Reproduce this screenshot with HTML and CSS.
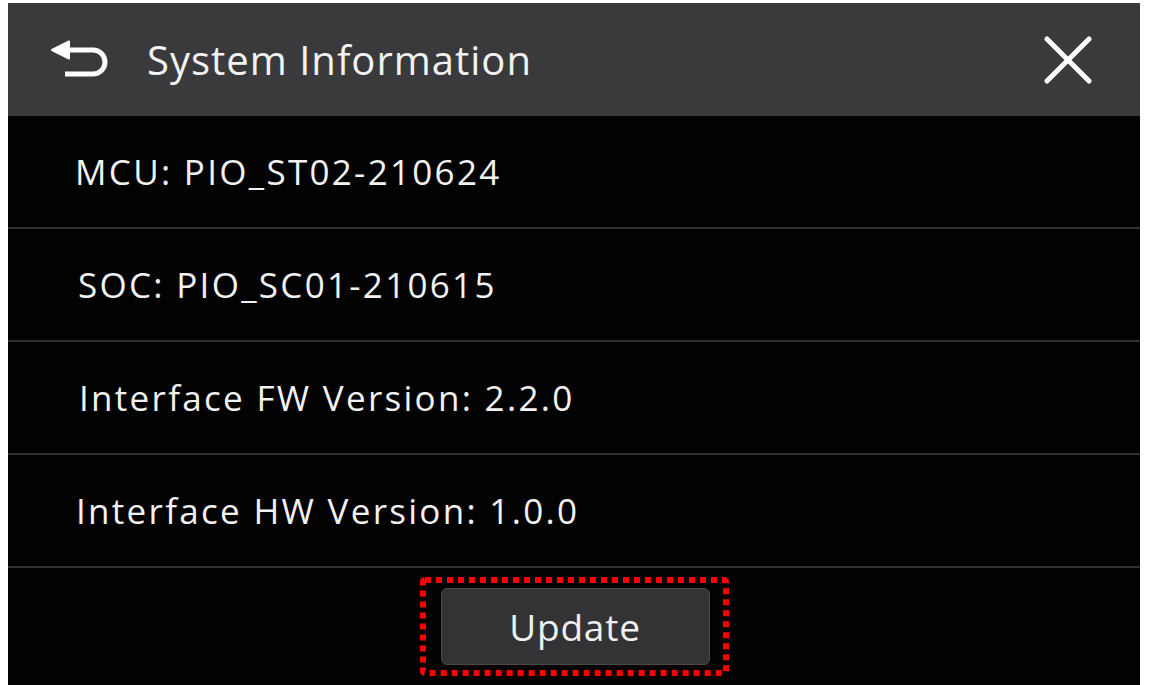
FILE: index.html
```html
<!DOCTYPE html>
<html lang="en">
<head>
<meta charset="utf-8">
<title>System Information</title>
<link rel="stylesheet" href="styles.css">
</head>
<body>
<div class="screen">
  <header class="topbar">
    <button class="icon-btn back" aria-label="Back">
      <svg width="60" height="44" viewBox="0 0 60 44">
        <path d="M16 12 H44 A12 12 0 0 1 44 36 H16" fill="none" stroke="#fff" stroke-width="5" stroke-linejoin="round"/>
        <path d="M3 12 L20 3.5 L20 20.5 Z" fill="#fff" stroke="#fff" stroke-width="2" stroke-linejoin="round"/>
      </svg>
    </button>
    <h1 class="title">System Information</h1>
    <button class="icon-btn close" aria-label="Close">
      <svg width="48" height="48" viewBox="0 0 48 48">
        <path d="M3 3 L45 45 M45 3 L3 45" stroke="#fff" stroke-width="5" stroke-linecap="round"/>
      </svg>
    </button>
  </header>
  <ul class="info-list">
    <li class="info-row r1">MCU: PIO_ST02-210624</li>
    <li class="info-row r2">SOC: PIO_SC01-210615</li>
    <li class="info-row r3">Interface FW Version: 2.2.0</li>
    <li class="info-row r4">Interface HW Version: 1.0.0</li>
  </ul>
  <footer class="footer">
    <div class="highlight">
      <svg class="dots" width="309" height="99" viewBox="0 0 309 99">
        <rect x="3" y="3" width="303" height="93" rx="2" fill="none" stroke="#ff0000" stroke-width="6" stroke-dasharray="6 5"/>
      </svg>
      <button class="update-btn">Update</button>
    </div>
  </footer>
</div>
</body>
</html>
```
FILE: styles.css
```css
html, body {
  background: #ffffff;
}
body {
  margin: 3px 9px 0 8px;
  font-family: "Open Sans", "Noto Sans", sans-serif;
  color: #f2f2f2;
}
.screen {
  background: #020202;
  height: 682px;
  display: flex;
  flex-direction: column;
}
.topbar {
  height: 113px;
  flex: none;
  background: #3a3a3d;
  display: flex;
  align-items: center;
}
.icon-btn {
  background: none;
  border: 0;
  padding: 0;
  display: flex;
  cursor: pointer;
}
.back {
  margin-left: 41px;
}
.title {
  margin: 0 0 0 38px;
  font-weight: 400;
  font-size: 40px;
  letter-spacing: 1px;
  color: #f2f2f2;
  flex: 1;
  line-height: 1;
}
.close {
  margin-right: 48px;
}
.info-list {
  list-style: none;
  margin: 0;
  padding: 0;
}
.info-row {
  height: 113px;
  box-sizing: border-box;
  border-bottom: 2px solid #2f2f2f;
  display: flex;
  align-items: center;
  padding-left: 67px;
  font-size: 35px;
  letter-spacing: 2.3px;
  color: #f2f2f2;
}
.r2 { padding-left: 70px; }
.r3 { padding-left: 71px; }
.r4 { padding-left: 68px; }
.footer {
  flex: 1;
  display: flex;
  align-items: center;
  justify-content: center;
}
.highlight {
  position: relative;
  padding: 11px 19px 11px 21px;
  display: flex;
}
.dots {
  position: absolute;
  left: 0;
  top: 0;
}
.update-btn {
  width: 269px;
  height: 77px;
  background: #333336;
  border: 1px solid #4a4a4d;
  border-radius: 6px;
  color: #f0f0f0;
  font-family: "Open Sans", "Noto Sans", sans-serif;
  font-size: 37px;
  letter-spacing: 0.8px;
  padding: 0;
}
```
